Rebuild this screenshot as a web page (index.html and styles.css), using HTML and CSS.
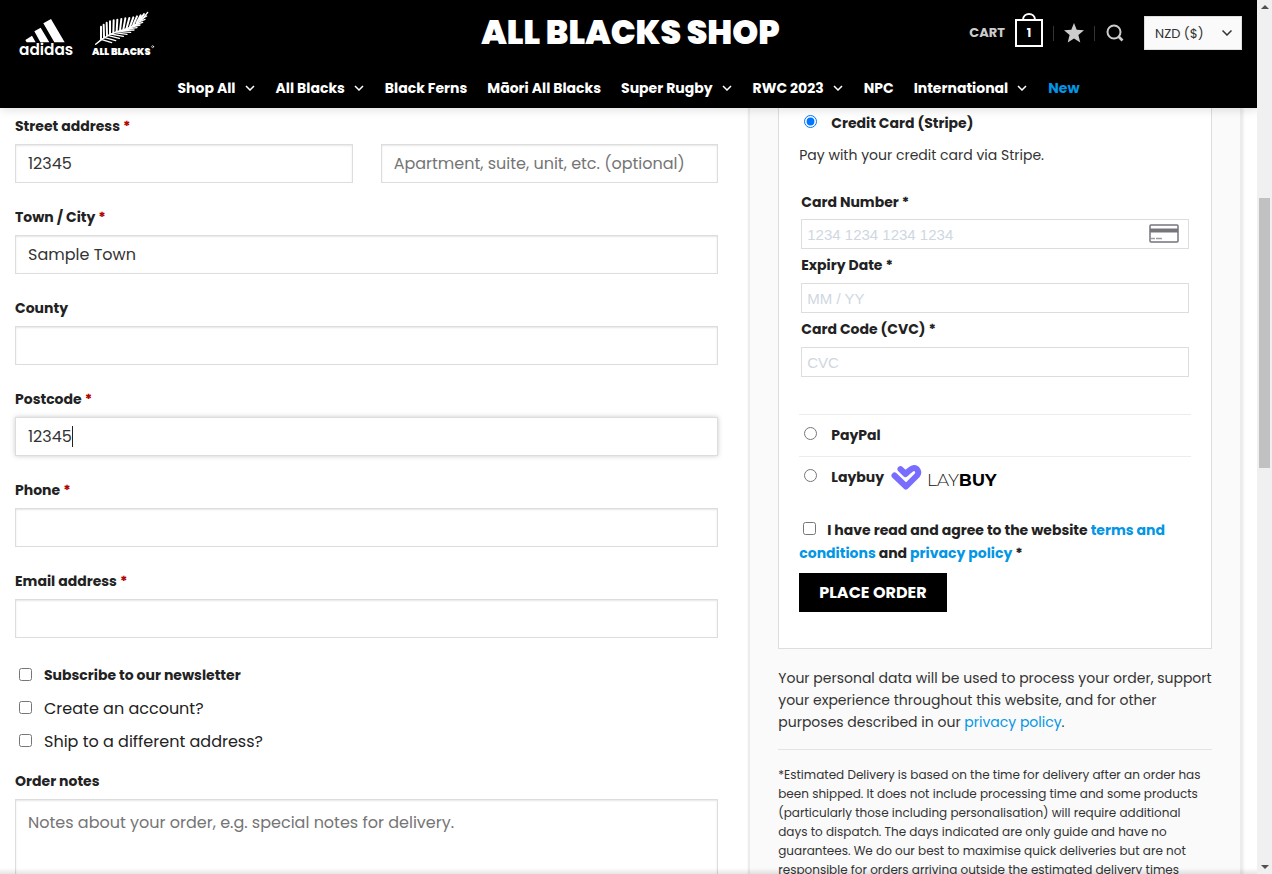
FILE: index.html
```
<!DOCTYPE html>
<html lang="en">
<head>
<meta charset="utf-8">
<meta name="viewport" content="width=device-width, initial-scale=1">
<title>Checkout - All Blacks Shop</title>
<link rel="stylesheet" href="styles.css">
</head>
<body>
<div class="window">
  <div class="page">
    <header class="header">
      <div class="header-top">
        <div class="brands">
          <svg class="adidas" viewBox="58 54 162 117" role="img" aria-label="adidas">
            <path d="M131 70L154 57L195 127H164ZM104 94L123 83L149 127H122ZM77 120L97 107L108 127H81Z" fill="#fff"/>
            <text x="58" y="164" class="adidas-word">adidas</text>
          </svg>
          <svg class="fern" viewBox="273 33 192 138" role="img" aria-label="All Blacks">
            <g fill="none" stroke="#fff" stroke-linecap="round">
              <path stroke-width="4" d="M287 133Q325 99 368 90Q418 76 443 37"/>
              <path stroke-width="6" d="M303 118V80M312 111L311 74M321 106L320 68M330 101V64M340 98L341 61M350 94L352 59M360 92L364 57M370 88L376 55M380 84L388 54M390 80L400 52M400 74L411 49M410 68L422 46M420 60L432 42"/>
              <path stroke-width="4" d="M303 118L335 128M312 112L347 122M322 106L358 115M332 102L370 109M343 98L381 103M354 95L392 97M365 92L402 90M376 88L411 83M387 83L420 75M398 77L428 67M410 69L435 58M420 60L440 48"/>
              <circle cx="458" cy="140" r="3" stroke-width="2"/>
            </g>
            <text x="276" y="164" class="fern-word">ALL BLACKS</text>
          </svg>
        </div>
        <a href="#" class="shop-name">ALL BLACKS SHOP</a>
        <div class="tools">
          <a href="#" class="cart">CART
            <svg width="28" height="36" viewBox="0 0 28 36" aria-hidden="true">
              <path d="M8 8C8 0 20 0 20 8" fill="none" stroke="#fff" stroke-width="2"/>
              <rect x="1" y="8" width="26" height="26" fill="#000" stroke="#fff" stroke-width="2"/>
              <text x="14" y="25" class="cart-count">1</text>
            </svg>
          </a>
          <span class="divider"></span>
          <a href="#" class="tool-icon" aria-label="Wishlist">
            <svg width="20" height="20" viewBox="0 0 20 20"><path fill="#ccc" d="M10 0l2.7 6.8 7.3.5-5.600 4.700 1.900 7.500L10 15.500 3.700 19.500l1.900-7.500L0 7.300l7.300-.5z"/></svg>
          </a>
          <span class="divider"></span>
          <a href="#" class="tool-icon search" aria-label="Search">
            <svg width="18" height="18" viewBox="0 0 18 18"><g fill="none" stroke="#ccc" stroke-width="2"><circle cx="8" cy="8" r="6.500"/><path d="M12.500 12.500L16.500 16.500" stroke-width="2.600"/></g></svg>
          </a>
          <div class="currency">
            <select aria-label="Currency"><option>NZD ($)</option><option>AUD ($)</option></select>
            <svg class="currency-arrow" width="10" height="6" viewBox="0 0 10 6" aria-hidden="true"><path d="M.5.5L5 5L9.500.5" fill="none" stroke="#333" stroke-width="1.500"/></svg>
          </div>
        </div>
      </div>
      <nav class="nav">
        <a href="#">Shop All <svg class="chev" viewBox="0 0 10 6"><path d="M1 1L5 5L9 1"/></svg></a>
        <a href="#">All Blacks <svg class="chev" viewBox="0 0 10 6"><path d="M1 1L5 5L9 1"/></svg></a>
        <a href="#">Black Ferns</a>
        <a href="#">Māori All Blacks</a>
        <a href="#">Super Rugby <svg class="chev" viewBox="0 0 10 6"><path d="M1 1L5 5L9 1"/></svg></a>
        <a href="#">RWC 2023 <svg class="chev" viewBox="0 0 10 6"><path d="M1 1L5 5L9 1"/></svg></a>
        <a href="#">NPC</a>
        <a href="#">International <svg class="chev" viewBox="0 0 10 6"><path d="M1 1L5 5L9 1"/></svg></a>
        <a href="#" class="new">New</a>
      </nav>
    </header>

    <form class="checkout">
      <div class="billing">
        <div class="field">
          <label for="street">Street address <abbr>*</abbr></label>
          <div class="pair">
            <input class="box" id="street" type="text" value="12345">
            <input class="box" type="text" aria-label="Apartment" placeholder="Apartment, suite, unit, etc. (optional)">
          </div>
        </div>
        <div class="field">
          <label for="town">Town / City <abbr>*</abbr></label>
          <input class="box" id="town" type="text" value="Sample Town">
        </div>
        <div class="field">
          <label for="county">County</label>
          <input class="box" id="county" type="text">
        </div>
        <div class="field active">
          <label for="postcode">Postcode <abbr>*</abbr></label>
          <input class="box" id="postcode" type="text" value="12345">
          <span class="caret"></span>
        </div>
        <div class="field">
          <label for="phone">Phone <abbr>*</abbr></label>
          <input class="box" id="phone" type="text">
        </div>
        <div class="field">
          <label for="email">Email address <abbr>*</abbr></label>
          <input class="box" id="email" type="email">
        </div>
        <div class="checks">
          <label class="strong"><input type="checkbox">Subscribe to our newsletter</label>
          <label><input type="checkbox">Create an account?</label>
          <label><input type="checkbox">Ship to a different address?</label>
        </div>
        <div class="field">
          <label for="notes">Order notes</label>
          <textarea class="box notes" id="notes" placeholder="Notes about your order, e.g. special notes for delivery."></textarea>
        </div>
      </div>

      <div class="side">
        <div class="side-inner">
          <div class="payment">
            <label class="method first"><input type="radio" name="pay" checked>Credit Card (Stripe)</label>
            <p class="method-text">Pay with your credit card via Stripe.</p>
            <div class="card-form">
              <label for="card">Card Number *</label>
              <div class="card-number">
                <input id="card" type="text" placeholder="1234 1234 1234 1234">
                <svg class="card-icon" width="30" height="19" viewBox="0 0 30 19" aria-hidden="true"><rect x="1" y="1" width="28" height="17" rx="1" fill="#fff" stroke="#74767c" stroke-width="1.500"/><path d="M1 6.500H29" stroke="#74767c" stroke-width="4"/><path d="M2 14.500H6M7 14.500H13" stroke="#9a9ca1" stroke-width="1.500"/></svg>
              </div>
              <label for="expiry">Expiry Date *</label>
              <input id="expiry" type="text" placeholder="MM / YY">
              <label for="cvc">Card Code (CVC) *</label>
              <input id="cvc" type="text" placeholder="CVC">
            </div>
            <label class="method"><input type="radio" name="pay">PayPal</label>
            <label class="method"><input type="radio" name="pay">Laybuy
              <svg class="laybuy" width="114" height="28" viewBox="0 0 114 28" role="img" aria-label="Laybuy">
                <path d="M4.500 11.500L16 22.500L27 11.500C30 8 27 3.500 23 4.200C21 4.500 19 7 15.500 10L10.500 5.200" fill="none" stroke="#786dff" stroke-width="6" stroke-linecap="round" stroke-linejoin="round"/>
                <text x="37" y="22" class="lay">LAY<tspan class="buy">BUY</tspan></text>
              </svg>
            </label>
            <div class="terms">
              <input type="checkbox" id="terms"><label for="terms">I have read and agree to the website <a href="#">terms and conditions</a> and <a href="#">privacy policy</a> *</label>
            </div>
            <button type="button" class="place">PLACE ORDER</button>
          </div>
          <p class="privacy">Your personal data will be used to process your order, support your experience throughout this website, and for other purposes described in our <a href="#">privacy policy</a>.</p>
          <p class="delivery">*Estimated Delivery is based on the time for delivery after an order has been shipped. It does not include processing time and some products (particularly those including personalisation) will require additional days to dispatch. The days indicated are only guide and have no guarantees. We do our best to maximise quick deliveries but are not responsible for orders arriving outside the estimated delivery times</p>
        </div>
      </div>
    </form>
  </div>
  <div class="scrollbar" aria-hidden="true">
    <span class="arrow up"></span>
    <span class="track"><span class="thumb"></span></span>
    <span class="arrow down"></span>
  </div>
</div>
</body>
</html>
```
FILE: styles.css
```
* { box-sizing: border-box; }

body {
  margin: 0;
  background: #fff;
  color: #333;
  font-family: Poppins, Inter, "Noto Sans", sans-serif;
  font-size: 14px;
}

a { color: #0296e5; text-decoration: none; }
p { margin: 0; }

.window { display: flex; height: 100vh; overflow: hidden; }

.page {
  position: relative;
  flex: 1;
  min-width: 0;
  display: flex;
  flex-direction: column;
  overflow: hidden;
}

.page::after {
  content: "";
  position: absolute;
  left: 0;
  right: 0;
  bottom: 0;
  height: 6px;
  background: linear-gradient(rgba(0, 0, 0, 0), rgba(0, 0, 0, .1));
}

/* Header */
.header {
  flex: none;
  position: relative;
  z-index: 1;
  background: #000;
  box-shadow: 1px 1px 10px rgba(0, 0, 0, .15);
}

.header-top {
  display: grid;
  grid-template-columns: 1fr auto 1fr;
  align-items: center;
  height: 66px;
  padding: 0 15px 0 19px;
}

.brands { display: flex; align-items: center; gap: 18px; }
.adidas { width: 54px; height: 39px; margin-top: 9px; }
.fern { width: 64px; height: 46px; margin-top: 1px; }
.adidas-word { font-size: 46px; font-weight: 600; fill: #fff; }
.fern-word { font-size: 29px; font-weight: 900; fill: #fff; }

.shop-name {
  color: #fff;
  font-size: 33px;
  font-weight: 900;
  line-height: 40px;
}

.tools { display: flex; justify-content: flex-end; align-items: center; }
.cart {
  display: flex;
  align-items: center;
  gap: 10px;
  color: #ccc;
  font-size: 13px;
  font-weight: 700;
}
.cart svg { margin-bottom: 6px; }
.cart-count { fill: #fff; font-size: 12px; font-weight: 700; text-anchor: middle; }
.divider { width: 1px; height: 15px; margin: 0 10px; background: #333; }
.tool-icon svg { display: block; }
.search { margin: 0 20px 0 1px; }

.currency { position: relative; }
.currency select {
  display: block;
  appearance: none;
  width: 98px;
  height: 34px;
  padding: 0 10px;
  border: 1px solid #ddd;
  border-radius: 0;
  background: #fafafa;
  color: #333;
  font-family: inherit;
  font-size: 13px;
}
.currency-arrow { position: absolute; right: 10px; top: 14px; pointer-events: none; }

.nav {
  display: flex;
  justify-content: center;
  align-items: center;
  gap: 20px;
  height: 42px;
  padding-top: 2px;
}
.nav a {
  display: flex;
  align-items: center;
  gap: 8px;
  color: #fff;
  font-size: 14px;
  font-weight: 700;
  white-space: nowrap;
}
.nav .new { color: #0296e5; }
.chev { width: 12px; height: 6px; fill: none; stroke: #fff; stroke-width: 1.5; }

/* Checkout columns */
.checkout {
  flex: 1;
  min-height: 0;
  display: grid;
  grid-template-columns: minmax(0, 7fr) minmax(0, 5fr);
}

.billing { padding: 8px 15px 0; }

.field {
  position: relative;
  display: flex;
  flex-direction: column;
  gap: 8px;
  margin-bottom: 24px;
}
.field label {
  color: #222;
  font-weight: 700;
  line-height: 20px;
}
.field abbr { color: #b20000; }
.pair { display: grid; grid-template-columns: 1fr 1fr; gap: 28px; }

.box {
  display: block;
  width: 100%;
  height: 39px;
  padding: 0 12px;
  border: 1px solid #ddd;
  border-radius: 0;
  background: #fff;
  box-shadow: inset 0 1px 2px rgba(0, 0, 0, .1);
  color: #333;
  font-family: inherit;
  font-size: 16px;
  outline: none;
}
.box::placeholder { color: #757575; }
.active .box { box-shadow: 0 0 5px #ccc; }
.caret {
  position: absolute;
  left: 57px;
  bottom: 9px;
  width: 1px;
  height: 21px;
  background: #222;
}
.notes { height: 120px; padding: 10px 12px; resize: none; }

.checks {
  display: flex;
  flex-direction: column;
  margin: -3px 0 13px;
}
.checks label {
  display: flex;
  align-items: center;
  gap: 12px;
  height: 33px;
  color: #222;
  font-size: 16px;
}
.checks .strong { font-size: 14px; font-weight: 700; }
input[type="checkbox"], input[type="radio"] { flex: none; width: 13px; height: 13px; margin: 0; }
.checks input[type="checkbox"] { margin: 0 0 3px 4px; }

/* Order panel */
.side { padding: 0 15px; }
.side-inner {
  height: 100%;
  padding: 0 28px;
  border: 2px solid #ececec;
  border-width: 0 2px;
  background: #fafafa;
  box-shadow: 1px 0 3px rgba(0, 0, 0, .1);
}

.payment {
  padding: 0 20px 36px;
  border: 1px solid #ddd;
  border-top: 0;
  background: #fff;
}
.method {
  display: flex;
  align-items: center;
  height: 42px;
  border-top: 1px solid #ececec;
  color: #222;
  font-weight: 700;
}
.method input[type="radio"] { margin: 0 14px 4px 5px; }
.method.first { height: 30px; border-top: 0; }
.method-text { line-height: 22px; margin-top: 6px; }
.laybuy { margin-left: 6px; }
.lay { fill: #111; font-family: Montserrat, Poppins, sans-serif; font-size: 17px; font-weight: 300; }
.buy { font-weight: 700; fill: #000; }

.card-form {
  display: flex;
  flex-direction: column;
  padding: 24px 2px 37px;
}
.card-form label {
  height: 34px;
  padding-top: 6px;
  color: #222;
  font-weight: 700;
  line-height: 20px;
}
.card-form label:first-child { height: 29px; padding-top: 2px; }
.card-form input {
  width: 100%;
  height: 30px;
  padding: 0 5px;
  border: 1px solid #ddd;
  border-radius: 0;
  background: #fff;
  font-family: "Liberation Sans", Arial, sans-serif;
  font-size: 15px;
}
.card-form input::placeholder { color: #cfd7df; }
.card-number { position: relative; }
.card-icon { position: absolute; right: 10px; top: 5px; }

.terms {
  margin-top: 21px;
  color: #222;
  font-weight: 700;
  line-height: 23px;
}
.terms input { margin: 0 11px 0 4px; }

.place {
  display: block;
  height: 39px;
  margin-top: 8px;
  padding: 0 20px;
  border: 0;
  background: #000;
  color: #fff;
  font-family: inherit;
  font-size: 16px;
  font-weight: 700;
}

.privacy {
  padding: 18px 0 16px;
  border-bottom: 1px solid #e4e4e4;
  line-height: 22px;
}
.delivery { padding-top: 15px; font-size: 12px; line-height: 19px; }

/* Scrollbar */
.scrollbar {
  flex: none;
  display: flex;
  flex-direction: column;
  align-items: center;
  width: 15px;
  background: #f0f0f0;
}
.arrow { margin: 5px 0; border: 4px solid transparent; }
.up { border-top: 0; border-bottom-color: #505050; }
.down { border-bottom: 0; border-top-color: #505050; }
.track { flex: 1; display: flex; flex-direction: column; width: 11px; }
.track::before { content: ""; flex: 184; }
.thumb { flex: 270; background: #c1c1c1; }
.track::after { content: ""; flex: 392; }
```
